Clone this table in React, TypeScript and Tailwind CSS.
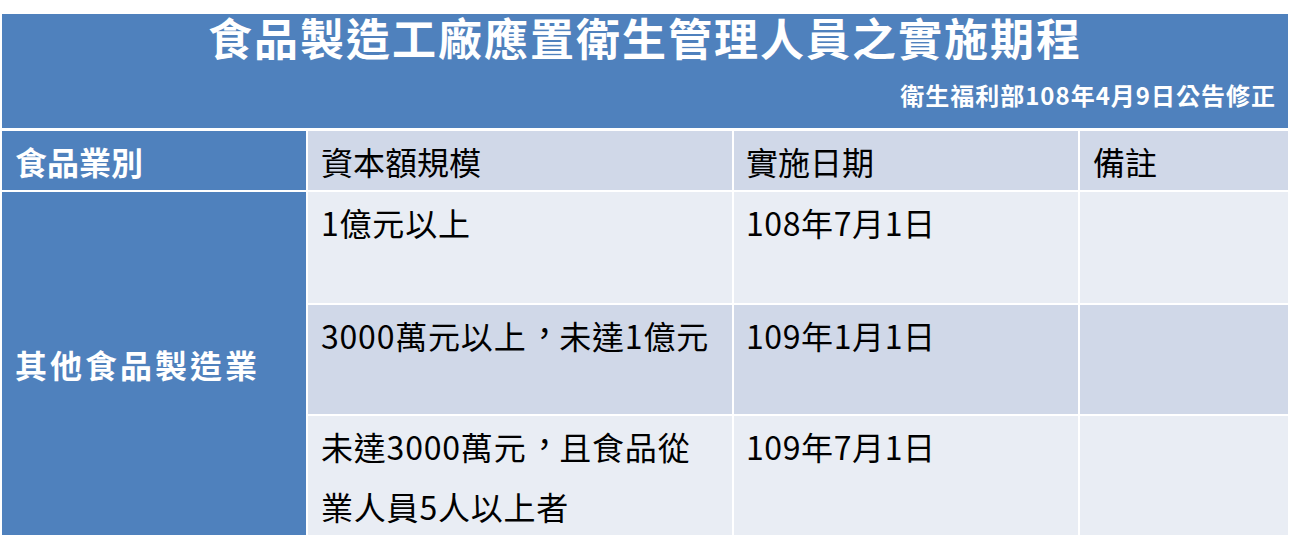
import React from 'react';

const FONT = '"Noto Sans CJK TC", "Noto Sans", sans-serif';

// fullwidth comma sits a bit higher in the reference (Traditional Chinese style)
function Comma() {
  return <span className="relative left-[2px] -top-[4px]">，</span>;
}

const rows = [
  { capital: [<>1億元以上</>], date: '108年7月1日', bg: 'bg-[#e9edf4]' },
  { capital: [<>3000萬元以上<Comma />未達1億元</>], date: '109年1月1日', bg: 'bg-[#d0d8e8]' },
  { capital: [<>未達3000萬元<Comma />且食品從</>, <>業人員5人以上者</>], date: '109年7月1日', bg: 'bg-[#e9edf4]' },
];

export default function App() {
  return (
    <div lang="zh-TW" className="min-h-screen bg-white pt-[14px] pl-[2px] w-[1288px]" style={{ fontFamily: FONT }}>
      {/* Title band */}
      <div className="h-[114px] bg-[#4f81bd] text-white">
        <div className="pt-[1px] text-center text-[44px] leading-[44px] font-bold tracking-[2px]">
          食品製造工廠應置衛生管理人員之實施期程
        </div>
        <div className="mt-[24px] pr-[12px] text-right text-[24px] leading-[24px] font-bold tracking-[1px]">
          衛生福利部108年4月9日公告修正
        </div>
      </div>

      {/* Table */}
      <div className="mt-[3px] grid grid-cols-[304px_424px_344px_208px] grid-rows-[59px_111px_109px_119px] gap-[2px]">
        <div className="bg-[#4f81bd] pl-[13px] text-[32px] leading-[60px] font-bold text-white">食品業別</div>
        <div className="bg-[#d0d8e8] pl-[13px] text-[32px] leading-[60px] text-black">資本額規模</div>
        <div className="bg-[#d0d8e8] pl-[12px] text-[32px] leading-[60px] text-black">實施日期</div>
        <div className="bg-[#d0d8e8] pl-[13px] text-[32px] leading-[60px] text-black">備註</div>

        <div className="row-span-3 flex items-center bg-[#4f81bd] pl-[13px] text-[32px] font-bold tracking-[3px] text-white">
          其他食品製造業
        </div>
        {rows.map((r, i) => (
          <React.Fragment key={i}>
            <div className={`${r.bg} pl-[13px] text-[32px] leading-[60px] tracking-[0.8px] text-black`}>
              {r.capital.map((line, j) => (
                <div key={j}>{line}</div>
              ))}
            </div>
            <div className={`${r.bg} pl-[12px] text-[32px] leading-[60px] tracking-[0.6px] text-black`}>{r.date}</div>
            <div className={r.bg}></div>
          </React.Fragment>
        ))}
      </div>
    </div>
  );
}
